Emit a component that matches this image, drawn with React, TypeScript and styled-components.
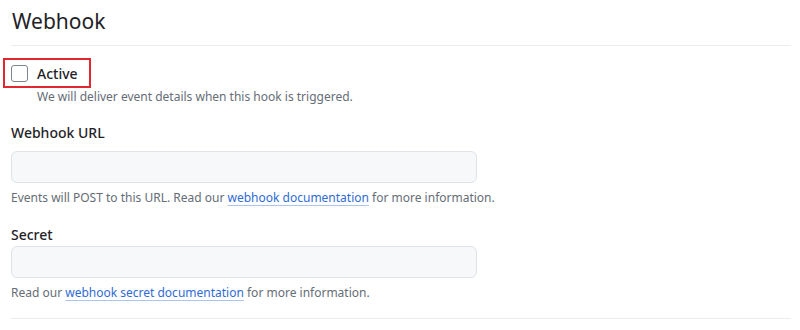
import styled, { createGlobalStyle } from "styled-components";

const GlobalStyle = createGlobalStyle`
  body {
    margin: 0;
    background: #fff;
    font-family: "Noto Sans", "Liberation Sans", sans-serif;
    color: #1f2328;
  }
`;

const Page = styled.div`
  width: 800px;
  height: 330px;
  padding: 0 9px 0 11px;
  box-sizing: border-box;
`;

const Subhead = styled.div`
  display: flex;
  align-items: center;
  height: 45px;
  border-bottom: 1px solid #ebedef;
`;

const Heading = styled.h2`
  margin: 0;
  padding-left: 1px;
  font-size: 21px;
  font-weight: 400;
  line-height: 1;
  margin-top: -2px;
`;

const Form = styled.div`
  display: flex;
  flex-direction: column;
  padding-top: 12px;
`;

const CheckRow = styled.label`
  display: flex;
  align-items: center;
  gap: 9px;
  width: 88px;
  height: 30px;
  margin-left: -8px;
  padding-left: 6px;
  box-sizing: border-box;
  border: 2px solid #e0282e;
`;

const Checkbox = styled.span`
  width: 17px;
  height: 17px;
  box-sizing: border-box;
  border: 1px solid #7d858e;
  border-radius: 3px;
  background: #fff;
  flex-shrink: 0;
`;

const CheckLabel = styled.span`
  font-size: 14px;
  font-weight: 500;
`;

const Note = styled.p<{ $indent?: boolean; $top?: number }>`
  margin: ${(p) => p.$top ?? 0}px 0 0;
  padding-left: ${(p) => (p.$indent ? "26px" : "0")};
  font-size: 12px;
  color: #656d76;
  line-height: 18px;
`;

const Group = styled.div<{ $top: number }>`
  display: flex;
  flex-direction: column;
  margin-top: ${(p) => p.$top}px;
`;

const Label = styled.div`
  font-size: 14px;
  font-weight: 500;
  line-height: 20px;
`;

const Input = styled.div<{ $gap: number }>`
  width: 466px;
  height: 32px;
  margin-top: ${(p) => p.$gap}px;
  box-sizing: border-box;
  border: 1px solid #dfe3e8;
  border-radius: 6px;
  background: #f6f8fa;
`;

const Link = styled.a`
  color: #2f6bd6;
  text-decoration: underline;
  text-decoration-color: rgba(47, 107, 214, 0.4);
  text-underline-offset: 3px;
`;

const Rule = styled.div`
  margin-top: 16px;
  border-top: 1px solid #ebedef;
`;

export default function App() {
  return (
    <Page>
      <GlobalStyle />
      <Subhead>
        <Heading>Webhook</Heading>
      </Subhead>
      <Form>
        <CheckRow>
          <Checkbox />
          <CheckLabel>Active</CheckLabel>
        </CheckRow>
        <Note $indent>We will deliver event details when this hook is triggered.</Note>
        <Group $top={17}>
          <Label>Webhook URL</Label>
          <Input $gap={8} />
          <Note $top={6}>
            Events will POST to this URL. Read our <Link>webhook documentation</Link> for more information.
          </Note>
        </Group>
        <Group $top={18}>
          <Label>Secret</Label>
          <Input $gap={1} />
          <Note $top={6}>
            Read our <Link>webhook secret documentation</Link> for more information.
          </Note>
        </Group>
        <Rule />
      </Form>
    </Page>
  );
}
